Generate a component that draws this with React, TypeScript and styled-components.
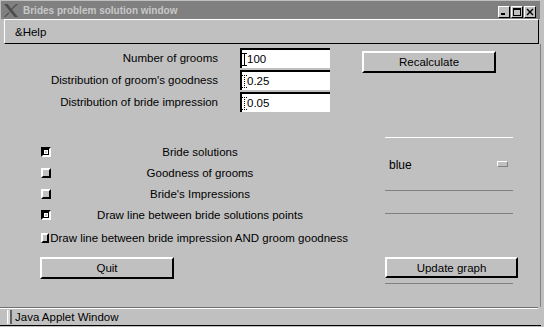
import React from 'react'
import styled, { createGlobalStyle } from 'styled-components'

const GlobalStyle = createGlobalStyle`
  html, body {
    margin: 0;
    padding: 0;
    background: #c0c0c0;
  }
  body {
    font-family: "Liberation Sans", Arial, sans-serif;
  }
`

const COLORS = {
    face: '#c0c0c0',
    shadow: '#808080',
    light: '#ffffff',
    dark: '#000000',
}

const PARAMS = [
    { label: 'Number of grooms', value: '100', dotted: false },
    { label: "Distribution of groom's goodness", value: '0.25', dotted: true },
    { label: 'Distribution of bride impression', value: '0.05', dotted: true },
]

const CHECKS = [
    { label: 'Bride solutions', checked: true, height: 21 },
    { label: 'Goodness of grooms', checked: false, height: 21 },
    { label: "Bride's Impressions", checked: false, height: 21 },
    { label: 'Draw line between bride solutions points', checked: true, height: 22 },
    { label: 'Draw line between bride impression AND groom goodness', checked: false, height: 23 },
]

const Caret: React.FC<{ dotted: boolean }> = ({ dotted }) => (
    <svg width="5" height="13" viewBox="0 0 5 13">
        <g stroke="#000" strokeWidth="1" strokeDasharray={dotted ? '1 1' : undefined} fill="none">
            <line x1="0" y1="0.5" x2="5" y2="0.5" />
            <line x1="2.5" y1="0" x2="2.5" y2="13" />
            <line x1="0" y1="12.5" x2="5" y2="12.5" />
        </g>
    </svg>
)

const App: React.FC = () => {
    return (
        <Window>
            <GlobalStyle />
            <TitleBar>
                <svg width="14" height="13" viewBox="0 0 14 13">
                    <polygon points="0,0 3.5,0 14,13 10.5,13" fill="#4c4c4c" />
                    <polygon points="12.3,0 14,0 6.2,7.2 5.4,6.4" fill="#4c4c4c" />
                    <polygon points="4.6,8.2 5.4,9 1.6,13 0,13" fill="#4c4c4c" />
                </svg>
                <Title>Brides problem solution window</Title>
                <TitleButtons>
                    <TitleButton>
                        <svg width="10" height="10" viewBox="0 0 10 10">
                            <rect x="2" y="6" width="4" height="2" fill="#000" />
                        </svg>
                    </TitleButton>
                    <TitleButton>
                        <svg width="10" height="10" viewBox="0 0 10 10">
                            <rect x="1.5" y="1.5" width="7" height="7" fill="none" stroke="#000" />
                            <rect x="1" y="1" width="8" height="2" fill="#000" />
                        </svg>
                    </TitleButton>
                    <TitleButton>
                        <svg width="10" height="10" viewBox="0 0 10 10">
                            <path d="M2 2 L8 8 M8 2 L2 8" stroke="#000" strokeWidth="1.4" />
                        </svg>
                    </TitleButton>
                </TitleButtons>
            </TitleBar>

            <MenuBar>
                <MenuItem>&amp;Help</MenuItem>
            </MenuBar>

            <Content>
                <ParamGrid>
                    {PARAMS.map(({ label, value, dotted }, i) => (
                        <React.Fragment key={label}>
                            <ParamLabel style={{ gridRow: i + 1 }}>{label}</ParamLabel>
                            <Field style={{ gridRow: i + 1 }}>
                                <Caret dotted={dotted} />
                                <FieldText>{value}</FieldText>
                            </Field>
                        </React.Fragment>
                    ))}
                    <RecalcButton>Recalculate</RecalcButton>
                </ParamGrid>

                <Lower>
                    <LeftCol>
                        {CHECKS.map(({ label, checked, height }) => (
                            <CheckRow key={label} height={height}>
                                <Box checked={checked}>{checked && <BoxDot />}</Box>
                                <CheckLabel>{label}</CheckLabel>
                            </CheckRow>
                        ))}
                        <Button width={134} height={22} top={8}>Quit</Button>
                    </LeftCol>

                    <RightCol>
                        <Rule light />
                        <ChoiceRow height={53} lined>
                            <ChoiceMain>
                                <span>blue</span>
                                <Indicator />
                            </ChoiceMain>
                        </ChoiceRow>
                        <ChoiceRow height={23} lined />
                        <ChoiceRow height={25} />
                        <Button width={133} height={21} top={18}>Update graph</Button>
                        <Rule top={5} />
                    </RightCol>
                </Lower>
            </Content>

            <Separator />
            <StatusBar>
                <StatusKnob />
                <StatusText>Java Applet Window</StatusText>
            </StatusBar>
        </Window>
    )
}

export default App

const Window = styled.div`
    width: 544px;
    height: 327px;
    box-sizing: border-box;
    background: ${COLORS.face};
    display: flex;
    flex-direction: column;
    overflow: hidden;
    font-family: "Liberation Sans", Arial, sans-serif;
    font-size: 11.5px;
    color: #000;
`

const TitleBar = styled.div`
    margin: 1px 4px 0 1px;
    height: 18px;
    background: ${COLORS.shadow};
    display: flex;
    align-items: center;
    padding-left: 3px;
    flex-shrink: 0;
`

const Title = styled.div`
    margin-left: 5px;
    font-size: 10px;
    font-weight: bold;
    color: #c8c8c8;
    white-space: nowrap;
`

const TitleButtons = styled.div`
    margin-left: auto;
    margin-right: 4px;
    margin-top: 4px;
    display: flex;
    gap: 1px;
`

const TitleButton = styled.div`
    width: 12px;
    height: 12px;
    box-sizing: border-box;
    background: ${COLORS.face};
    border-top: 1px solid ${COLORS.light};
    border-left: 1px solid ${COLORS.light};
    border-right: 1px solid ${COLORS.dark};
    border-bottom: 1px solid ${COLORS.dark};
    display: flex;
    align-items: center;
    justify-content: center;
`

const MenuBar = styled.div`
    margin: 0 5px 0 4px;
    height: 25px;
    box-sizing: border-box;
    border-top: 1px solid ${COLORS.light};
    border-left: 1px solid ${COLORS.light};
    border-right: 1px solid ${COLORS.dark};
    border-bottom: 1px solid ${COLORS.dark};
    display: flex;
    align-items: center;
    padding-left: 10px;
    flex-shrink: 0;
`

const MenuItem = styled.span`
    font-size: 11.5px;
`

const Content = styled.div`
    height: 263px;
    box-sizing: border-box;
    margin-right: 3px;
    border-right: 1px solid ${COLORS.shadow};
    display: flex;
    flex-direction: column;
    flex-shrink: 0;
`

const ParamGrid = styled.div`
    margin-top: 4px;
    display: grid;
    grid-template-columns: 240px 122px 134px;
    grid-auto-rows: 20px;
    row-gap: 2px;
`

const ParamLabel = styled.div`
    grid-column: 1;
    text-align: right;
    padding-right: 22px;
    line-height: 20px;
    white-space: nowrap;
`

const Field = styled.div`
    grid-column: 2;
    width: 90px;
    height: 20px;
    box-sizing: border-box;
    background: ${COLORS.light};
    border-top: 2px solid ${COLORS.dark};
    border-left: 2px solid ${COLORS.dark};
    display: flex;
    align-items: center;
`

const FieldText = styled.span`
    margin-left: 0;
`

interface ButtonProps {
    width: number,
    height: number,
    top: number,
}

const Button = styled.div<ButtonProps>`
    width: ${({ width }) => width}px;
    height: ${({ height }) => height}px;
    margin-top: ${({ top }) => top}px;
    box-sizing: border-box;
    background: ${COLORS.face};
    border-top: 2px solid ${COLORS.light};
    border-left: 2px solid ${COLORS.light};
    border-right: 2px solid ${COLORS.dark};
    border-bottom: 2px solid ${COLORS.dark};
    display: flex;
    align-items: center;
    justify-content: center;
    flex-shrink: 0;
`

const RecalcButton = styled(Button).attrs({ width: 134, height: 22, top: 3 })`
    grid-column: 3;
    grid-row: 1;
    align-self: start;
`

const Lower = styled.div`
    margin-top: 18px;
    display: flex;
`

const LeftCol = styled.div`
    margin-left: 40px;
    width: 308px;
    padding-top: 11px;
    display: flex;
    flex-direction: column;
`

const CheckRow = styled.div<{ height: number }>`
    height: ${({ height }) => height}px;
    display: flex;
    align-items: center;
`

const Box = styled.div<{ checked: boolean }>`
    width: 10px;
    height: 10px;
    margin-left: 1px;
    box-sizing: border-box;
    display: flex;
    align-items: center;
    justify-content: center;
    background: ${({ checked }) => checked ? COLORS.dark : COLORS.face};
    border-top: 2px solid ${({ checked }) => checked ? COLORS.dark : COLORS.light};
    border-left: 2px solid ${({ checked }) => checked ? COLORS.dark : COLORS.light};
    border-right: 2px solid ${({ checked }) => checked ? COLORS.light : COLORS.dark};
    border-bottom: 2px solid ${({ checked }) => checked ? COLORS.light : COLORS.dark};
`

const BoxDot = styled.div`
    width: 4px;
    height: 4px;
    background: ${COLORS.face};
    border: 1px solid ${COLORS.light};
    box-sizing: border-box;
`

const CheckLabel = styled.div`
    flex: 1;
    text-align: center;
    white-space: nowrap;
    padding-left: 1px;
`

const RightCol = styled.div`
    margin-left: 37px;
    width: 133px;
    padding-top: 7px;
    display: flex;
    flex-direction: column;
`

const Rule = styled.div<{ light?: boolean, top?: number }>`
    width: 128px;
    height: 1px;
    margin-top: ${({ top }) => top || 0}px;
    background: ${({ light }) => light ? COLORS.light : COLORS.shadow};
    flex-shrink: 0;
`

const ChoiceRow = styled.div<{ height: number, lined?: boolean }>`
    width: 128px;
    height: ${({ height }) => height}px;
    box-sizing: border-box;
    border-bottom: ${({ lined }) => lined ? `1px solid ${COLORS.shadow}` : 'none'};
    display: flex;
    flex-direction: column;
    flex-shrink: 0;
`

const ChoiceMain = styled.div`
    flex: 1;
    display: flex;
    align-items: center;
    justify-content: space-between;
    padding: 1px 5px 0 4px;
    font-size: 12px;
`

const Indicator = styled.div`
    width: 11px;
    height: 6px;
    margin-top: -2px;
    box-sizing: border-box;
    border-top: 1px solid ${COLORS.light};
    border-left: 1px solid ${COLORS.light};
    border-right: 1px solid ${COLORS.shadow};
    border-bottom: 1px solid ${COLORS.shadow};
`

const Separator = styled.div`
    margin-right: 6px;
    height: 2px;
    box-sizing: border-box;
    border-top: 1px solid #707070;
    border-bottom: 1px solid ${COLORS.light};
    flex-shrink: 0;
`

const StatusBar = styled.div`
    height: 17px;
    box-sizing: border-box;
    margin-right: 3px;
    border-bottom: 1px solid ${COLORS.dark};
    display: flex;
    align-items: center;
    flex-shrink: 0;
`

const StatusKnob = styled.div`
    width: 5px;
    height: 14px;
    margin-left: 7px;
    box-sizing: border-box;
    background: #d8d8d8;
    border-left: 1px solid ${COLORS.light};
    border-right: 2px solid #606060;
`

const StatusText = styled.span`
    margin-left: 3px;
`
